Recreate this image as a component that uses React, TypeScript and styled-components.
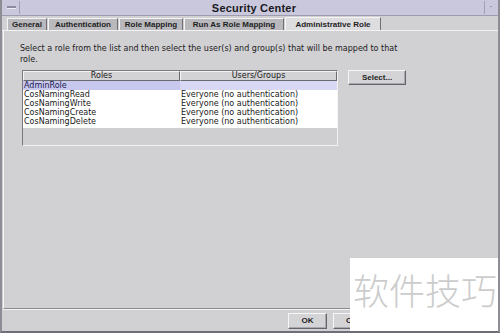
import styled, { createGlobalStyle } from 'styled-components'

const GlobalStyle = createGlobalStyle`
  html, body {
    margin: 0;
    padding: 0;
    background: #d1d0d3;
  }
  body {
    font-family: "DejaVu Sans", Verdana, sans-serif;
  }
`

const tabs = [
  { label: 'General', width: 40 },
  { label: 'Authentication', width: 70 },
  { label: 'Role Mapping', width: 64 },
  { label: 'Run As Role Mapping', width: 100 },
  { label: 'Administrative Role', width: 96 },
]

const roles = [
  { role: 'AdminRole', users: '' },
  { role: 'CosNamingRead', users: 'Everyone (no authentication)' },
  { role: 'CosNamingWrite', users: 'Everyone (no authentication)' },
  { role: 'CosNamingCreate', users: 'Everyone (no authentication)' },
  { role: 'CosNamingDelete', users: 'Everyone (no authentication)' },
]

export default function App() {
  const active = 4
  return (
    <>
      <GlobalStyle />
      <SWindow>
        <STitleBar>
          <SMenuBox>
            <SMenuDash />
          </SMenuBox>
          <STitle>Security Center</STitle>
          <SCloseBox>·</SCloseBox>
        </STitleBar>
        <STabStrip>
          {tabs.map((t, i) => (
            <STab key={t.label} $active={i === active} style={{ width: t.width }}>
              {t.label}
            </STab>
          ))}
        </STabStrip>
        <SPanel>
          <SIntro>
            Select a role from the list and then select the user(s) and group(s) that will be mapped to that
            <br />
            role.
          </SIntro>
          <SRow>
            <STable>
              <SHeader>
                <SHeadCell>Roles</SHeadCell>
                <SHeadCell>Users/Groups</SHeadCell>
              </SHeader>
              <SBody>
                {roles.map((r, i) => (
                  <SLine key={r.role} $selected={i === 0}>
                    <SCell $selected={i === 0}>{r.role}</SCell>
                    <SCell>{r.users}</SCell>
                  </SLine>
                ))}
              </SBody>
              <SEmpty />
            </STable>
            <SButton $width={58}>Select...</SButton>
          </SRow>
        </SPanel>
        <SButtonBar>
          <SButton $width={39} $height={16}>OK</SButton>
          <SButton $width={52} $height={16}>Cancel</SButton>
        </SButtonBar>
        <SWatermark>软件技巧</SWatermark>
      </SWindow>
    </>
  )
}

const SWindow = styled.div`
  position: relative;
  width: 500px;
  height: 333px;
  box-sizing: border-box;
  display: flex;
  flex-direction: column;
  background: #d1d0d3;
  border-left: 2px solid #8e8d96;
  border-right: 2px solid #8e8d96;
  border-bottom: 2px solid #6e6d78;
  overflow: hidden;
`

const STitleBar = styled.div`
  height: 15px;
  flex: none;
  display: flex;
  align-items: center;
  background: #c9c8dc;
  border-bottom: 1px solid #9e9db0;
`

const SMenuBox = styled.div`
  width: 16px;
  height: 13px;
  margin-left: 1px;
  border-right: 1px solid #a2a1b4;
  display: flex;
  align-items: center;
  justify-content: center;
`

const SMenuDash = styled.div`
  width: 9px;
  height: 2px;
  background: #8d8c9e;
  border-bottom: 1px solid #ecebf4;
`

const STitle = styled.div`
  flex: 1;
  text-align: center;
  font-family: "Liberation Sans", Arial, sans-serif;
  font-size: 11px;
  font-weight: bold;
  color: #1a1a22;
  letter-spacing: 0.2px;
  padding-left: 4px;
`

const SCloseBox = styled.div`
  width: 12px;
  height: 13px;
  margin-right: 1px;
  border-left: 1px solid #a2a1b4;
  font-size: 9px;
  color: #6c6b7c;
  text-align: center;
  line-height: 13px;
`

const STabStrip = styled.div`
  height: 13px;
  flex: none;
  display: flex;
  align-items: flex-end;
  gap: 1px;
  padding-left: 5px;
  padding-top: 1px;
  border-bottom: 1px solid #f2f2f2;
`

const STab = styled.div<{ $active?: boolean }>`
  box-sizing: border-box;
  height: ${(p) => (p.$active ? '13px' : '12px')};
  display: flex;
  align-items: center;
  justify-content: center;
  font-family: "Liberation Sans", Arial, sans-serif;
  font-size: 8px;
  font-weight: bold;
  white-space: nowrap;
  color: #1e1e1e;
  background: ${(p) => (p.$active ? '#dddcdf' : '#b9b8bc')};
  border-top: 1px solid #f4f4f4;
  border-left: 1px solid #f4f4f4;
  border-right: 1px solid #6f6e74;
`

const SPanel = styled.div`
  flex: 1;
  margin-left: 1px;
  padding: 12px 16px 0 16px;
  border-left: 1px solid #f4f4f4;
  border-bottom: 1px solid #8a8990;
  box-shadow: 0 1px 0 #f4f4f4;
  display: flex;
  flex-direction: column;
  gap: 5px;
`

const SIntro = styled.div`
  font-size: 8px;
  line-height: 11px;
  color: #202020;
  white-space: nowrap;
`

const SRow = styled.div`
  display: flex;
  align-items: flex-start;
  gap: 10px;
  margin-left: 2px;
`

const STable = styled.div`
  width: 316px;
  box-sizing: border-box;
  border: 1px solid #7b7a80;
  border-right-color: #f2f2f2;
  border-bottom-color: #f2f2f2;
  display: flex;
  flex-direction: column;
  background: #d1d0d3;
`

const SHeader = styled.div`
  display: grid;
  grid-template-columns: 157px 1fr;
  height: 10px;
`

const SHeadCell = styled.div`
  box-sizing: border-box;
  font-size: 8px;
  line-height: 8px;
  text-align: center;
  color: #202020;
  background: #d3d2d5;
  border-top: 1px solid #f4f4f4;
  border-left: 1px solid #f4f4f4;
  border-right: 1px solid #6a6970;
  border-bottom: 1px solid #6a6970;
`

const SBody = styled.div`
  background: #ffffff;
  display: flex;
  flex-direction: column;
  padding-bottom: 2px;
`

const SLine = styled.div<{ $selected?: boolean }>`
  display: grid;
  grid-template-columns: 157px 1fr;
  height: 9px;
  background: ${(p) => (p.$selected ? '#d8d8f4' : '#ffffff')};
`

const SCell = styled.div<{ $selected?: boolean }>`
  font-size: 8px;
  line-height: 9px;
  padding-left: 1px;
  color: ${(p) => (p.$selected ? '#1a1a50' : '#202020')};
  background: ${(p) => (p.$selected ? '#c8c8ee' : 'transparent')};
  white-space: nowrap;
  overflow: hidden;
`

const SEmpty = styled.div`
  height: 17px;
  background: #cfced1;
`

const SButton = styled.div<{ $width: number; $height?: number }>`
  box-sizing: border-box;
  width: ${(p) => p.$width}px;
  height: ${(p) => p.$height ?? 15}px;
  display: flex;
  align-items: center;
  justify-content: center;
  font-family: "Liberation Sans", Arial, sans-serif;
  font-size: 8px;
  font-weight: bold;
  color: #1e1e1e;
  background: #d4d3d6;
  border-top: 1px solid #f6f6f6;
  border-left: 1px solid #f6f6f6;
  border-right: 1px solid #66656c;
  border-bottom: 1px solid #66656c;
  box-shadow: inset -1px -1px 0 #a9a8ae;
`

const SButtonBar = styled.div`
  height: 21px;
  flex: none;
  display: flex;
  align-items: center;
  justify-content: flex-end;
  gap: 6px;
  padding-right: 113px;
  padding-top: 1px;
`

const SWatermark = styled.div`
  position: absolute;
  right: -2px;
  bottom: -2px;
  width: 150px;
  height: 75px;
  box-sizing: border-box;
  padding-top: 9px;
  background: #ffffff;
  color: #cccccc;
  font-family: "Noto Sans CJK SC", sans-serif;
  font-size: 36px;
  font-weight: 300;
  line-height: 44px;
  display: flex;
  justify-content: center;
  white-space: nowrap;
`
